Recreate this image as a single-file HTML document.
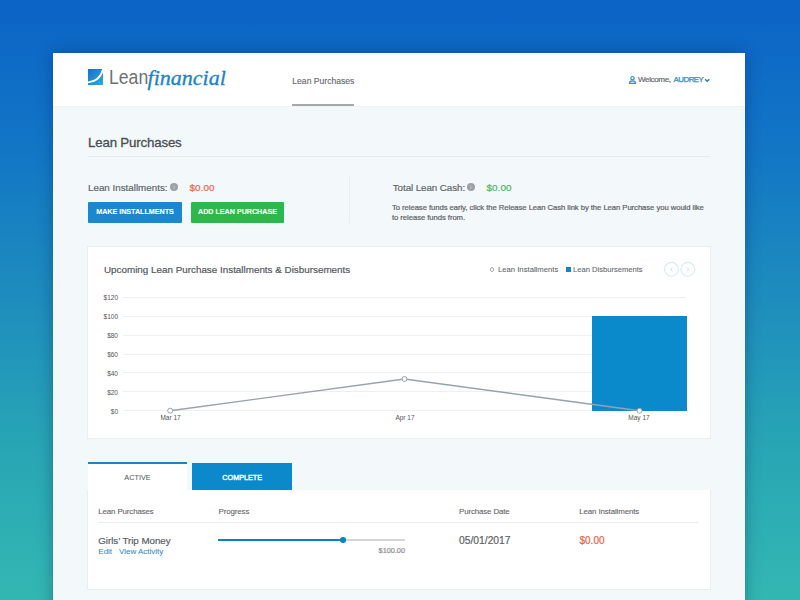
<!DOCTYPE html>
<html><head><meta charset="utf-8">
<style>
*{margin:0;padding:0;box-sizing:border-box}
html,body{width:800px;height:600px;overflow:hidden}
body{font-family:"Liberation Sans",sans-serif;background:linear-gradient(180deg,#0b63c6 0%,#1276c5 25%,#1e8dbd 50%,#28a6b4 75%,#33b7b2 100%);position:relative;color:#555}
.t{position:absolute;white-space:nowrap;line-height:1;-webkit-text-stroke:0.2px}
#panel{position:absolute;left:53px;top:53px;width:692px;height:560px;background:#f3f8fb;box-shadow:0 0 14px rgba(0,30,80,.35)}
#hdr{position:absolute;left:53px;top:53px;width:692px;height:54px;background:#fff;border-bottom:1px solid #eff1f3}
.card{position:absolute;background:#fff;border:1px solid #eaeef1}
.btn{-webkit-text-stroke:0.1px;position:absolute;top:202px;height:20.5px;border-radius:1px;color:#fff;font-weight:bold;font-size:7.15px;display:flex;align-items:center;justify-content:center;line-height:1}
.grid{position:absolute;left:123px;width:563px;height:1.3px;margin-top:-0.3px;background:#efefef}
.yl{position:absolute;left:96px;width:22px;text-align:right;font-size:6.5px;color:#555;line-height:1}
.xl{position:absolute;width:40px;text-align:center;font-size:6.5px;color:#555;line-height:1}
.info{position:absolute;width:8.1px;height:8.1px;border-radius:50%;background:#9da1a5;color:#c4c7ca;font-size:6px;font-weight:bold;text-align:center;line-height:8px}
</style></head><body>
<div id="panel"></div>
<div id="hdr"></div>

<!-- logo -->
<svg style="position:absolute;left:87.5px;top:69px" width="15.5" height="16" viewBox="0 0 15.5 16">
  <defs><linearGradient id="lg" x1="0" y1="0" x2="1" y2="1"><stop offset="0" stop-color="#1a70c4"/><stop offset="1" stop-color="#2eaae4"/></linearGradient></defs>
  <rect x="0" y="0" width="15.5" height="16" fill="url(#lg)"/>
  <path d="M-1 13.4 C6.5 13.2 12.6 9 15.2 0.3 L15.8 -1.5" stroke="#fff" stroke-width="1.9" fill="none"/>
</svg>
<div class="t" style="left:109px;top:67px;font-size:20.5px;color:#6f7173;-webkit-text-stroke:0;transform:scaleX(0.86);transform-origin:0 0">Lean</div>
<div class="t" style="left:147.6px;top:66.7px;font-family:'Liberation Serif',serif;font-style:italic;font-size:22px;letter-spacing:0px;-webkit-text-stroke:0.35px;color:#1c84c6">financial</div>

<!-- nav -->
<div class="t" style="left:292.3px;top:77px;font-size:8.6px;-webkit-text-stroke:0.12px;color:#66696d">Lean Purchases</div>
<div style="position:absolute;left:292.3px;top:104.4px;width:62px;height:1.6px;background:#a3a8ad"></div>

<!-- welcome -->
<svg style="position:absolute;left:626px;top:74px" width="14" height="12" viewBox="626 74 14 12">
  <circle cx="632.5" cy="78.2" r="1.7" fill="none" stroke="#3a8acb" stroke-width="1.2"/>
  <path d="M629.4 83.3 Q629.6 80.9 632.5 80.9 Q635.4 80.9 635.6 83.3 Z" fill="none" stroke="#3a8acb" stroke-width="1.2" stroke-linejoin="round"/>
</svg>
<div class="t" style="left:638px;top:76px;font-size:8.1px;letter-spacing:-0.4px;color:#66696d">Welcome,</div>
<div class="t" style="left:673.5px;top:76.3px;font-size:7.9px;letter-spacing:-0.5px;-webkit-text-stroke:0.25px;color:#2f86c8">AUDREY</div>
<svg style="position:absolute;left:700px;top:74px" width="14" height="12" viewBox="700 74 14 12">
  <path d="M705.1 79.2 L707.2 81.3 L709.3 79.2" fill="none" stroke="#2f7cbd" stroke-width="1.5"/>
</svg>

<!-- heading -->
<div class="t" style="left:88px;top:135.6px;font-size:13.3px;letter-spacing:-0.18px;-webkit-text-stroke:0.3px;color:#4a4f55">Lean Purchases</div>
<div style="position:absolute;left:88px;top:155.7px;width:622px;height:1.2px;background:#e6ebef"></div>

<!-- installments -->
<div class="t" style="left:88px;top:183px;font-size:9.8px;color:#62676c">Lean Installments:</div>
<div class="info" style="left:170px;top:183.2px">i</div>
<div class="t" style="left:189.5px;top:183px;font-size:9.9px;letter-spacing:0.1px;color:#ee6247">$0.00</div>
<div class="btn" style="left:88px;width:94px;background:#1a88cf">MAKE INSTALLMENTS</div>
<div class="btn" style="left:191px;width:93px;background:#2db84b">ADD LEAN PURCHASE</div>

<div style="position:absolute;left:349px;top:176px;width:1px;height:47px;background:#e9eef2"></div>

<div class="t" style="left:392.8px;top:183px;font-size:9.8px;letter-spacing:-0.08px;color:#62676c">Total Lean Cash:</div>
<div class="info" style="left:466.8px;top:183.2px">i</div>
<div class="t" style="left:486.5px;top:183px;font-size:9.9px;letter-spacing:0.1px;color:#4bb65a">$0.00</div>
<div class="t" style="left:392px;top:203.8px;font-size:7.7px;letter-spacing:-0.06px;color:#5d6165">To release funds early, click the Release Lean Cash link by the Lean Purchase you would like</div>
<div class="t" style="left:392px;top:214px;font-size:7.7px;letter-spacing:-0.06px;color:#5d6165">to release funds from.</div>

<!-- chart card -->
<div class="card" style="left:87px;top:245.6px;width:624px;height:193px"></div>
<div class="t" style="left:104px;top:265px;font-size:9.86px;color:#55595e">Upcoming Lean Purchase Installments &amp; Disbursements</div>

<div style="position:absolute;left:489.7px;top:266.9px;width:4.8px;height:4.8px;border-radius:50%;border:1.1px solid #a3b1bc"></div>
<div class="t" style="left:498px;top:266.3px;font-size:7.7px;-webkit-text-stroke:0.08px;color:#63676b">Lean Installments</div>
<div style="position:absolute;left:566px;top:267.3px;width:4.8px;height:4.8px;background:#0a88c9"></div>
<div class="t" style="left:573px;top:266.3px;font-size:7.6px;-webkit-text-stroke:0.08px;color:#63676b">Lean Disbursements</div>
<svg style="position:absolute;left:660px;top:260px" width="40" height="20" viewBox="660 260 40 20">
  <circle cx="671.5" cy="269.3" r="6.9" fill="none" stroke="#d5ecf3" stroke-width="1.1"/>
  <circle cx="687.8" cy="269.3" r="6.9" fill="none" stroke="#d5ecf3" stroke-width="1.1"/>
  <path d="M672.3 267.6 L670.8 269.4 L672.3 271.2" fill="none" stroke="#b9d3e3" stroke-width="0.8"/>
  <path d="M687.1 267.6 L688.6 269.4 L687.1 271.2" fill="none" stroke="#b9d3e3" stroke-width="0.8"/>
</svg>

<div class="grid" style="top:297px"></div>
<div class="grid" style="top:316px"></div>
<div class="grid" style="top:335px"></div>
<div class="grid" style="top:354px"></div>
<div class="grid" style="top:372px"></div>
<div class="grid" style="top:391px"></div>
<div class="grid" style="top:410px"></div>
<div class="yl" style="top:295px">$120</div>
<div class="yl" style="top:314px">$100</div>
<div class="yl" style="top:333px">$80</div>
<div class="yl" style="top:352px">$60</div>
<div class="yl" style="top:371px">$40</div>
<div class="yl" style="top:390px">$20</div>
<div class="yl" style="top:409px">$0</div>

<div style="position:absolute;left:592.3px;top:316px;width:94.5px;height:95px;background:#0a89cb"></div>
<svg style="position:absolute;left:0;top:0" width="800" height="600" viewBox="0 0 800 600">
  <polyline points="170.2,410.7 404.5,379 639.5,410.8" fill="none" stroke="#96a2ac" stroke-width="1.4"/>
  <circle cx="170.2" cy="410.7" r="2.5" fill="#fff" stroke="#96a2ac" stroke-width="1"/>
  <circle cx="404.5" cy="379" r="2.5" fill="#fff" stroke="#96a2ac" stroke-width="1"/>
  <circle cx="639.5" cy="410.8" r="2.5" fill="#fff" stroke="#96a2ac" stroke-width="1"/>
</svg>
<div class="xl" style="left:150.5px;top:414.5px">Mar 17</div>
<div class="xl" style="left:385px;top:414.5px">Apr 17</div>
<div class="xl" style="left:619px;top:414.5px">May 17</div>

<!-- tabs -->
<div style="position:absolute;left:88px;top:462px;width:99px;height:29px;background:#fff;border-top:2px solid #1785c9"></div>
<div class="t" style="left:88px;top:474px;width:99px;text-align:center;font-size:7.3px;-webkit-text-stroke:0.05px;color:#55595e">ACTIVE</div>
<div style="position:absolute;left:192.3px;top:462.8px;width:99.8px;height:27.4px;background:#0b89cb"></div>
<div class="t" style="left:192.3px;top:474px;width:99.8px;text-align:center;font-size:7.3px;letter-spacing:-0.05px;-webkit-text-stroke:0.4px;color:#fff">COMPLETE</div>

<!-- table card -->
<div class="card" style="left:87px;top:490px;width:624px;height:99.5px;border-top:none"></div>
<div style="position:absolute;left:88px;top:489px;width:99px;height:3px;background:#fff"></div>
<div class="t" style="left:98.3px;top:508px;font-size:7.9px;letter-spacing:-0.12px;-webkit-text-stroke:0.1px;color:#5f6368">Lean Purchases</div>
<div class="t" style="left:218.6px;top:508px;font-size:7.9px;letter-spacing:-0.12px;-webkit-text-stroke:0.1px;color:#5f6368">Progress</div>
<div class="t" style="left:459px;top:508px;font-size:7.9px;letter-spacing:-0.12px;-webkit-text-stroke:0.1px;color:#5f6368">Purchase Date</div>
<div class="t" style="left:579.3px;top:508px;font-size:7.9px;letter-spacing:-0.12px;-webkit-text-stroke:0.1px;color:#5f6368">Lean Installments</div>
<div style="position:absolute;left:98px;top:521.8px;width:601px;height:1.6px;background:#eaedf0"></div>

<div class="t" style="left:98.3px;top:535.5px;font-size:9.8px;letter-spacing:-0.05px;color:#5d6166">Girls’ Trip Money</div>
<div class="t" style="left:98.3px;top:548px;font-size:8px;-webkit-text-stroke:0.05px;color:#3088cc">Edit</div>
<div class="t" style="left:119px;top:548px;font-size:8px;-webkit-text-stroke:0.05px;color:#3088cc">View Activity</div>

<div style="position:absolute;left:218.3px;top:538.9px;width:186.7px;height:2.1px;background:#cfd7dd"></div>
<div style="position:absolute;left:218.3px;top:538.9px;width:124px;height:2.1px;background:#0f7fc6"></div>
<div style="position:absolute;left:340.3px;top:537.1px;width:5.5px;height:5.5px;border-radius:50%;background:#0f7fc6"></div>
<div class="t" style="left:365px;top:547px;width:40px;text-align:right;font-size:7.3px;color:#8a8e92">$100.00</div>

<div class="t" style="left:459px;top:535.5px;font-size:10.3px;color:#5d6166">05/01/2017</div>
<div class="t" style="left:579.4px;top:535.5px;font-size:10px;letter-spacing:0.05px;color:#ee6247">$0.00</div>

</body></html>
